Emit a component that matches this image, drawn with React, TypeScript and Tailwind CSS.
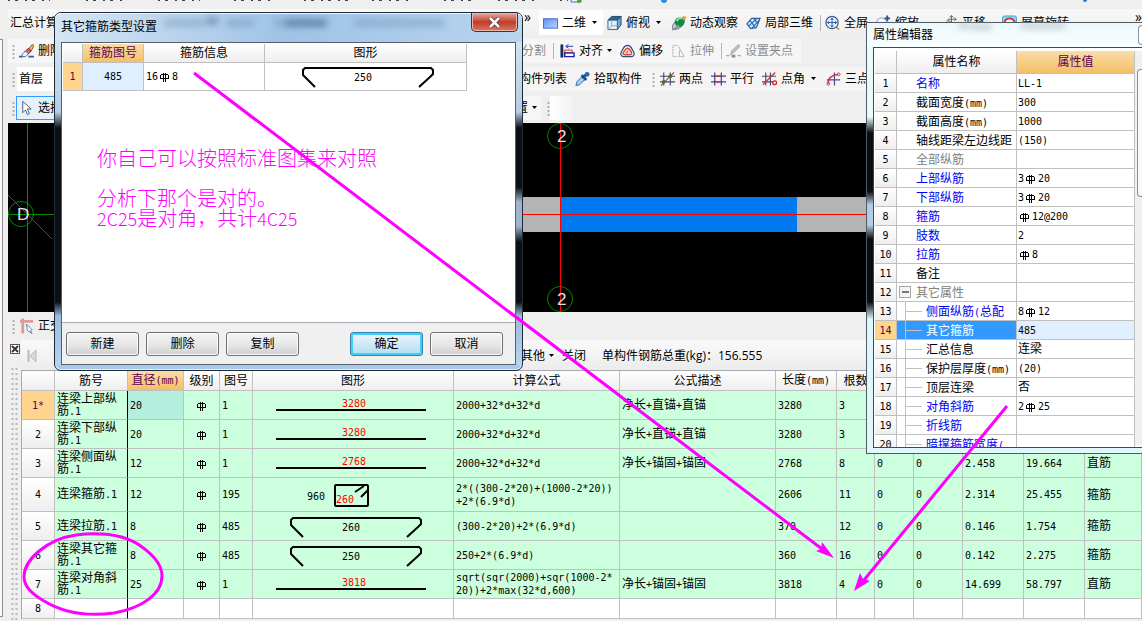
import React, { ReactNode } from "react";

const MONO = "font-['DejaVu_Sans_Mono','Noto_Sans_CJK_SC',monospace]";

interface BarRow {
  no: string;
  name: string;
  diameter: string;
  figure: string;
  shape: ReactNode;
  formula: string;
  note: string;
  length: string;
  count: string;
  unit: string;
  total: string;
  kind: string;
}

interface PropertyRow {
  name: string;
  value?: string;
  tone?: "blue" | "gray";
  level?: number;
  selected?: boolean;
}

// hot rolled bar grade mark
const Grade = () => (
  <svg width="14" height="12" viewBox="0 0 14 12" className="inline-block align-[-3px]" fill="none" stroke="#000" shapeRendering="crispEdges">
    <path d="M3 3.500h7M2.500 4v4M10.500 4v4M5.500 2v9M7.500 2v9M2 7.500h9" />
  </svg>
);

// half-width characters take six pixels beside twelve pixel hanzi
const Txt = ({ children }: { children: string }) => (
  <>
    {children.split(/([\x21-\x7e]+|Φ)/).map((part, index) => {
      if (part === "Φ") return <Grade key={index} />;
      if (/^[\x21-\x7e]/.test(part))
        return (
          <span key={index} className={`${MONO} text-[10px]`}>
            {part}
          </span>
        );
      return part;
    })}
  </>
);

const Straight = ({ label }: { label: string }) => (
  <svg width="200" height="28" className="block">
    <text x="101" y="16" textAnchor="middle" fill="#f00" className={`${MONO} text-[10px]`}>
      {label}
    </text>
    <path d="M23 19h150" stroke="#000" strokeWidth="2" />
  </svg>
);

const Hooked = ({ label }: { label: string }) => (
  <svg width="200" height="27" className="block">
    <text x="98" y="18" textAnchor="middle" className={`${MONO} text-[10px]`}>
      {label}
    </text>
    <path d="M50 24L38 12V7l2-2h126l2 2v4l-3 3-11 10" fill="none" stroke="#000" strokeWidth="2" />
  </svg>
);

const Stirrup = () => (
  <svg width="200" height="33" className="block">
    <text x="54" y="22" className={`${MONO} text-[10px]`}>
      960
    </text>
    <rect x="82" y="7" width="33" height="21" rx="1" fill="none" stroke="#000" strokeWidth="2" />
    <text x="83" y="25" fill="#f00" className={`${MONO} text-[10px]`}>
      260
    </text>
    <path d="M102 14l9-6M108 19l7-7" stroke="#000" strokeWidth="2" />
  </svg>
);

const BARS: BarRow[] = [
  { no: "1*", name: "连梁上部纵筋.1", diameter: "20", figure: "1", shape: <Straight label="3280" />, formula: "2000+32*d+32*d", note: "净长+直锚+直锚", length: "3280", count: "3", unit: "8.09", total: "24.27", kind: "直筋" },
  { no: "2", name: "连梁下部纵筋.1", diameter: "20", figure: "1", shape: <Straight label="3280" />, formula: "2000+32*d+32*d", note: "净长+直锚+直锚", length: "3280", count: "3", unit: "8.09", total: "24.27", kind: "直筋" },
  { no: "3", name: "连梁侧面纵筋.1", diameter: "12", figure: "1", shape: <Straight label="2768" />, formula: "2000+32*d+32*d", note: "净长+锚固+锚固", length: "2768", count: "8", unit: "2.458", total: "19.664", kind: "直筋" },
  { no: "4", name: "连梁箍筋.1", diameter: "12", figure: "195", shape: <Stirrup />, formula: "2*((300-2*20)+(1000-2*20))\n+2*(6.9*d)", note: "", length: "2606", count: "11", unit: "2.314", total: "25.455", kind: "箍筋" },
  { no: "5", name: "连梁拉筋.1", diameter: "8", figure: "485", shape: <Hooked label="260" />, formula: "(300-2*20)+2*(6.9*d)", note: "", length: "370", count: "12", unit: "0.146", total: "1.754", kind: "箍筋" },
  { no: "6", name: "连梁其它箍筋.1", diameter: "8", figure: "485", shape: <Hooked label="250" />, formula: "250+2*(6.9*d)", note: "", length: "360", count: "16", unit: "0.142", total: "2.275", kind: "箍筋" },
  { no: "7", name: "连梁对角斜筋.1", diameter: "25", figure: "1", shape: <Straight label="3818" />, formula: "sqrt(sqr(2000)+sqr(1000-2*\n20))+2*max(32*d,600)", note: "净长+锚固+锚固", length: "3818", count: "4", unit: "14.699", total: "58.797", kind: "直筋" },
];

const PROPERTIES: PropertyRow[] = [
  { name: "名称", value: "LL-1", tone: "blue" },
  { name: "截面宽度(mm)", value: "300" },
  { name: "截面高度(mm)", value: "1000" },
  { name: "轴线距梁左边线距", value: "(150)" },
  { name: "全部纵筋", tone: "gray" },
  { name: "上部纵筋", value: "3Φ20", tone: "blue" },
  { name: "下部纵筋", value: "3Φ20", tone: "blue" },
  { name: "箍筋", value: "Φ12@200", tone: "blue" },
  { name: "肢数", value: "2", tone: "blue" },
  { name: "拉筋", value: "Φ8", tone: "blue" },
  { name: "备注" },
  { name: "其它属性", tone: "gray", level: 1 },
  { name: "侧面纵筋(总配", value: "8Φ12", tone: "blue", level: 2 },
  { name: "其它箍筋", value: "485", level: 2, selected: true },
  { name: "汇总信息", value: "连梁", level: 2 },
  { name: "保护层厚度(mm)", value: "(20)", level: 2 },
  { name: "顶层连梁", value: "否", level: 2 },
  { name: "对角斜筋", value: "2Φ25", tone: "blue", level: 2 },
  { name: "折线筋", tone: "blue", level: 2 },
  { name: "暗撑箍筋宽度(", tone: "blue", level: 2 },
];

const COLUMNS = ["筋号", "直径(mm)", "级别", "图号", "图形", "计算公式", "公式描述", "长度(mm)", "根数", "", "", "", "", ""];

const Icon = ({ children }: { children: ReactNode }) => (
  <svg width="15" height="16" viewBox="0 0 16 16" fill="none" className="shrink-0">
    {children}
  </svg>
);

const Caret = ({ tight }: { tight?: boolean }) => (
  <svg width={tight ? 5 : 9} height="4" viewBox="0 0 5 4" className="shrink-0">
    <path d="M0 0h5L2.5 3z" fill="#000" />
  </svg>
);

const Grip = () => (
  <svg width="3" height="15" className="shrink-0">
    <path d="M1.500 1v14" stroke="#b0b0b0" strokeWidth="2" strokeDasharray="2 2" />
  </svg>
);

const Divider = () => <div className="ml-[3px] h-4 w-px shrink-0 bg-[#b4b4b4]" />;

interface ToolProps {
  label: string;
  icon?: ReactNode;
  caret?: "wide" | "tight";
  disabled?: boolean;
  className?: string;
}

const Tool = ({ label, icon, caret, disabled, className = "" }: ToolProps) => (
  <button
    type="button"
    disabled={disabled}
    className={`flex h-6 shrink-0 items-center gap-1 px-1 whitespace-nowrap disabled:text-[#8c8c8c] ${className}`}
  >
    {icon && <Icon>{icon}</Icon>}
    {label}
    {caret && <Caret tight={caret === "tight"} />}
  </button>
);

const rectIcon = (
  <>
    <defs>
      <linearGradient id="blueRect" x1="0" y1="0" x2="1" y2="1">
        <stop stopColor="#5d92f7" />
        <stop offset="1" stopColor="#bcd3ff" />
      </linearGradient>
    </defs>
    <rect x="0.500" y="3.500" width="15" height="10" fill="url(#blueRect)" stroke="#4466c0" />
  </>
);
const cubeIcon = (
  <>
    <path d="M1 5l4-4h10l-4 4z" fill="#2a6595" stroke="#1f4668" />
    <path d="M11 5l4-4v9l-4 5z" fill="#72a5d3" stroke="#1f4668" />
    <path d="M1 5h10v10H1z" fill="#e6f1fa" stroke="#2e628e" />
    <path d="M5 5v6h6M5 11l-4 4" stroke="#7ea8cc" />
  </>
);
const orbitIcon = (
  <>
    <ellipse cx="8" cy="9" rx="8" ry="4" transform="rotate(-40 8 9)" fill="#c4ced6" stroke="#6a7a88" />
    <circle cx="9" cy="7" r="5" fill="#0c8f3c" />
    <path d="M6 6q2-4 6-3" stroke="#8cebaa" strokeWidth="2" />
    <path d="M1 15q5-1 7-5" stroke="#8a94a0" strokeWidth="2" />
    <circle cx="14" cy="2.500" r="2" fill="#e8a818" />
  </>
);
const meshIcon = (
  <>
    <path d="M1 9l5-6 9 0-4 10-6 1z" fill="#cfe5f7" stroke="#265f9c" strokeWidth="1.200" />
    <path d="M4 5l6 8M8 3l5 6M3 11l8-7M6 14l8-9" stroke="#2d6fb2" strokeWidth="1.200" />
  </>
);
const fullIcon = (
  <>
    <path d="M12 12l3 3" stroke="#d39b45" strokeWidth="2" />
    <circle cx="7.500" cy="7.500" r="6.500" fill="#edf4fd" stroke="#3e5f96" strokeWidth="1.400" />
    <path d="M7.500 3v9M3 7.500h9M6 4.500l1.500-2 1.500 2M6 10.500l1.500 2 1.500-2M4.500 6l-2 1.500 2 1.500M10.500 6l2 1.500-2 1.500" stroke="#2d5596" />
  </>
);
const zoomIcon = (
  <>
    <circle cx="6" cy="8" r="5.500" fill="#f3f8fc" stroke="#8899aa" />
    <path d="M9 3h6M12 0v6" stroke="#31527c" strokeWidth="2" />
  </>
);
const panIcon = (
  <>
    <path d="M9 0v8M5 4h9M7 2l2-2 2 2M12 2l2 2-2 2" stroke="#53626e" />
    <path d="M2 9l3-4 6 3v6H4z" fill="#ead58f" stroke="#927c38" />
  </>
);
const spinIcon = (
  <>
    <rect x="0.500" y="0.500" width="15" height="15" rx="2" fill="#8bd4f1" stroke="#3ba4cc" />
    <path d="M2 10a6 7 0 0 1 12 0" fill="#fff" stroke="#cd3236" strokeWidth="2" />
  </>
);
const alignIcon = (
  <>
    <path d="M2 1v14" stroke="#182e54" strokeWidth="3" />
    <path d="M14 3H7M9 1L6 3l3 2" stroke="#2a2ab4" />
    <path d="M5 7h8v3H5z" stroke="#d22" />
    <path d="M5 10h10v4H5z" stroke="#22229e" strokeWidth="1.500" />
  </>
);
const offsetIcon = (
  <>
    <path d="M8 2c4 0 4 3 6 6s1 6-2 6H4c-3 0-4-3-2-6s2-6 6-6z" stroke="#314c78" strokeWidth="1.300" />
    <path d="M8 5c2 0 3 2 4 4s0 3-1 3H5c-2 0-2-2-1-3s2-4 4-4z" fill="#fbd7d0" stroke="#d54a40" strokeWidth="1.500" />
    <path d="M8 8v2H6" stroke="#d54a40" />
  </>
);
const stretchIcon = (
  <>
    <path d="M7 2H2v12h5" stroke="#a8a8a8" strokeDasharray="2 1" />
    <path d="M8 3l6 11H8M9 7v7" stroke="#b4b4b4" />
  </>
);
const clampIcon = (
  <>
    <path d="M5 12l1-4 7-7 2 2-7 7z" fill="#c0c0c0" stroke="#aaa" />
    <path d="M0 13h4M12 13h4" stroke="#999" />
    <path d="M6 12h4v3H6z" fill="#909090" />
  </>
);
const pickIcon = (
  <>
    <path d="M1 15l1-4 6-6 3 3-6 6z" fill="#a8d0f4" stroke="#2a6ab0" />
    <path d="M7 4l5 5M9 6l4-4" stroke="#174d8e" strokeWidth="3" />
    <circle cx="13" cy="3" r="2.500" fill="#2a64ab" />
  </>
);
const twoPointIcon = (
  <>
    <path d="M4 1v14M11 1v14M0 5h16M0 11h16" stroke="#46466e" strokeWidth="1.200" />
    <path d="M1 15L15 1" stroke="#d43030" strokeWidth="1.200" />
    <circle cx="4" cy="11" r="2" fill="#357a28" />
    <circle cx="11" cy="5" r="2" fill="#357a28" />
  </>
);
const parallelIcon = (
  <>
    <path d="M4 1v14M11 1v14" stroke="#46466e" strokeWidth="1.300" />
    <path d="M0 5h16M0 11h16" stroke="#3b3bb0" strokeWidth="1.300" />
    <path d="M5 5h6M5 11h6" stroke="#d43030" strokeWidth="1.300" />
  </>
);
const angleIcon = (
  <>
    <path d="M4 1v14M9 1v14M0 5h15M0 11h12" stroke="#46466e" strokeWidth="1.200" />
    <path d="M1 14L14 1" stroke="#d43030" strokeWidth="1.400" />
    <circle cx="13.500" cy="12" r="2" stroke="#d22" strokeWidth="1.500" />
  </>
);
const arcIcon = (
  <>
    <path d="M9 1v14M1 9h14" stroke="#4a4a92" strokeWidth="1.300" />
    <path d="M2 13c0-6 4-9 11-10" stroke="#d43030" strokeWidth="1.500" />
    <circle cx="2.500" cy="13" r="1.500" stroke="#d43030" />
    <circle cx="13.500" cy="3" r="1.500" stroke="#d43030" />
  </>
);
const eraserIcon = (
  <>
    <path d="M0 14h4M10 14h6" stroke="#33629c" strokeWidth="2" />
    <path d="M10 6l4-5 2 1-3 6z" fill="#f0bd35" stroke="#8a6416" />
    <path d="M6 9l4-4 3 3-4 4z" fill="#d95d79" stroke="#6a2f3a" />
    <path d="M3 12l4-4 3 3-3 3H4z" fill="#f5f5ff" stroke="#50608e" />
  </>
);
const cursorPath = "M4 1v12l3-3 2 5 2-1-2-5h4z";

const Toolbars = () => (
  <div className="flex flex-col bg-[#efefef]">
    <svg width="100%" height="9" className="block" aria-hidden="true">
      <path d="M0 0.500h42M78 0.500h40M150 0.500h42M226 0.500h36M296 0.500h44M364 0.500h40M436 0.500h34M490 0.500h36M552 0.500h8" stroke="#3f3f48" strokeDasharray="2 5 3 7" />
      <path d="M563 0v2h10v-2" stroke="#3a78b8" fill="none" />
      <circle cx="571" cy="1" r="2" fill="#4ba91f" />
      <circle cx="656" cy="0" r="3" fill="#2d8be0" />
      <circle cx="1077" cy="0" r="2" fill="#2d6be0" />
    </svg>
    <div className="flex h-7 items-center bg-linear-to-b from-[#f8f8f8] to-[#eeeeee]">
      <div className="w-[514px] shrink-0">
        <button type="button" className="px-0.5">汇总计算</button>
      </div>
      <span className="w-[17px] shrink-0 self-start pl-0.5 text-sm leading-4">»</span>
      <Tool label="二维" icon={rectIcon} caret="wide" className="bg-white" />
      <Tool label="俯视" icon={cubeIcon} caret="wide" />
      <Tool label="动态观察" icon={orbitIcon} />
      <Tool label="局部三维" icon={meshIcon} />
      <Divider />
      <Tool label="全屏" icon={fullIcon} />
      <Tool label="缩放" icon={zoomIcon} />
      <Tool label="平移" icon={panIcon} className="ml-4" />
      <Tool label="屏幕旋转" icon={spinIcon} className="ml-2" />
      <span className="ml-auto self-start text-sm leading-4">»</span>
    </div>
    <div className="flex h-7 items-center">
      <div className="flex h-6 w-[510px] shrink-0 items-center bg-[#f6f6f6] pl-1">
        <Grip />
        <Tool label="删除" icon={eraserIcon} />
      </div>
      <div className="flex h-6 items-center bg-[#f6f6f6] pr-1">
        <Tool label="分割" disabled />
        <Divider />
        <Tool label="对齐" icon={alignIcon} caret="tight" className="ml-0.5" />
        <Tool label="偏移" icon={offsetIcon} />
        <Tool label="拉伸" icon={stretchIcon} disabled />
        <Divider />
        <Tool label="设置夹点" icon={clampIcon} disabled />
      </div>
    </div>
    <div className="flex h-7 items-center">
      <div className="flex w-[507px] shrink-0 items-center pl-1">
        <Grip />
        <select aria-label="楼层" className="ml-0.5 h-6 w-20 appearance-none bg-white px-0.5">
          <option>首层</option>
        </select>
      </div>
      <div className="flex h-6 grow items-center bg-[#f4f4f4]">
        <Tool label="构件列表" />
        <Tool label="拾取构件" icon={pickIcon} className="mr-1.5" />
        <Grip />
        <Tool label="两点" icon={twoPointIcon} className="ml-px" />
        <Tool label="平行" icon={parallelIcon} />
        <Tool label="点角" icon={angleIcon} caret="wide" />
        <Tool label="三点" icon={arcIcon} />
      </div>
    </div>
    <div className="flex h-[30px] items-center">
      <div className="flex w-[504px] shrink-0 items-center pl-1">
        <Grip />
        <Tool
          label="选择"
          icon={<path d={cursorPath} fill="#fff" stroke="#4a5a70" />}
          className="ml-px border border-[#3399ff] bg-[#e4f0fb] pl-0.5"
        />
      </div>
      <Tool label="置" caret="tight" className="mr-1.5 bg-[#f6f6f6]" />
      <Grip />
      <div className="h-6 w-6 bg-linear-to-r from-white to-[#f2f2f2]" />
    </div>
  </div>
);

const Canvas = () => (
  <svg width="100%" height="189" className="block shrink-0 bg-black font-['Liberation_Sans',sans-serif] text-[17px]">
    <g stroke="#008a00" fill="none">
      <path d="M19.500 0v189M0 91.500h60M0 72l44 44" />
      <circle cx="13" cy="91" r="12.500" />
      <circle cx="552" cy="13" r="12.500" />
      <circle cx="552" cy="176" r="12.500" />
    </g>
    <rect x="500" y="74" width="100%" height="35" fill="#b4b4b4" />
    <rect x="553" y="74" width="236" height="35" fill="#0078f0" />
    <path d="M500 91.500h900M552.500 0v189" stroke="#f00" />
    <g fill="#e0e0e0">
      <text x="9" y="97">D</text>
      <text x="549" y="19">2</text>
      <text x="549" y="182">2</text>
    </g>
  </svg>
);

const headCell = "border-r border-b border-[#c0c0c0] bg-linear-to-b from-white to-[#eeeeee] p-0 text-center font-normal whitespace-nowrap overflow-hidden";
const hotHead = "border-r border-b border-[#c0c0c0] bg-linear-to-b from-[#fbdcaa] to-[#f3bf63] p-0 text-center font-normal whitespace-nowrap text-[#5c0050]";
const hotRow = "border-r border-b border-[#c0c0c0] bg-[#ffd48c] p-0 text-center font-normal text-[#5c0050]";

const BarTable = () => (
  <table className="w-full table-fixed border-separate border-spacing-0 border-t border-l border-[#a8a8b0] leading-3">
    <colgroup>
      <col className="w-[33px]" />
      <col className="w-[73px]" />
      <col className="w-[56px]" />
      <col className="w-[36px]" />
      <col className="w-[33px]" />
      <col className="w-[201px]" />
      <col className="w-[166px]" />
      <col className="w-[156px]" />
      <col className="w-[61px]" />
      <col className="w-[38px]" />
      <col className="w-[39px]" />
      <col className="w-[49px]" />
      <col className="w-[61px]" />
      <col className="w-[61px]" />
      <col />
    </colgroup>
    <thead>
      <tr className="h-5">
        <th className={headCell} />
        {COLUMNS.map((title, index) => (
          <th key={index} className={index === 1 ? hotHead : headCell}>
            <Txt>{title}</Txt>
          </th>
        ))}
      </tr>
    </thead>
    <tbody>
      {BARS.map((bar, index) => {
        const cell = "border-r border-b border-[#c0c0c0] bg-[#ccffdd] py-0 pr-0 pl-0.5";
        const bareCell = "border-r border-b border-[#c0c0c0] bg-[#ccffdd] p-0";
        return (
          <tr key={bar.no} className={bar.no === "4" ? "h-[34px]" : "h-[29px]"}>
            <th className={index === 0 ? `${hotRow} font-bold` : headCell}>
              <Txt>{bar.no}</Txt>
            </th>
            <td className="border-r border-b border-r-black border-b-[#c0c0c0] bg-[#ccffdd] py-0 pr-0 pl-0.5">
              <Txt>{bar.name}</Txt>
            </td>
            <td className={index === 0 ? "border-r border-b border-[#c0c0c0] bg-[#b4eedd] py-0 pr-0 pl-0.5" : cell}>
              <Txt>{bar.diameter}</Txt>
            </td>
            <td className={`${bareCell} text-center`}>
              <Grade />
            </td>
            <td className={cell}>
              <Txt>{bar.figure}</Txt>
            </td>
            <td className={bareCell}>{bar.shape}</td>
            <td className={`${cell} whitespace-pre`}>
              <Txt>{bar.formula}</Txt>
            </td>
            <td className={cell}>
              <Txt>{bar.note}</Txt>
            </td>
            <td className={cell}>
              <Txt>{bar.length}</Txt>
            </td>
            <td className={cell}>
              <Txt>{bar.count}</Txt>
            </td>
            <td className={cell}>
              <Txt>0</Txt>
            </td>
            <td className={cell}>
              <Txt>0</Txt>
            </td>
            <td className={cell}>
              <Txt>{bar.unit}</Txt>
            </td>
            <td className={cell}>
              <Txt>{bar.total}</Txt>
            </td>
            <td className={cell}>{bar.kind}</td>
          </tr>
        );
      })}
      <tr className="h-5">
        <th className={headCell}>
          <Txt>8</Txt>
        </th>
        {COLUMNS.map((_, index) => (
          <td
            key={index}
            className={
              index === 0
                ? "border-r border-b border-r-black border-b-[#c0c0c0] bg-white"
                : "border-r border-b border-[#c0c0c0] bg-white"
            }
          />
        ))}
      </tr>
    </tbody>
  </table>
);

const dialogButton = "h-6 w-[73px] rounded-[3px] border border-[#707070] bg-linear-to-b from-[#f3f3f3] via-[#e8e8e8] to-[#d0d0d0] shadow-[inset_0_0_0_1px_#fafafa]";

const StirrupDialog = () => (
  <section
    aria-label="其它箍筋类型设置"
    className="absolute top-3 left-[54px] flex w-[469px] flex-col rounded-[7px] border border-[#1e2a38] bg-[#a9c9ea] shadow-[inset_0_0_0_1px_#e3f1fc]"
  >
    <header className="flex h-[29px] items-start justify-between rounded-t-md bg-linear-to-r from-[#d5e5f3] via-[#9fc3e6] to-[#b9d5ef] pl-1.5 shadow-[inset_0_1px_0_#eef7ff]">
      <h2 className="pt-1.5 leading-4">其它箍筋类型设置</h2>
      <svg width="300" height="24" aria-hidden="true" className="min-w-0 shrink blur-[3px]">
        <path d="M0 10h40M62 10h28M110 10h54M190 10h90" stroke="#6d8dae" strokeWidth="8" opacity="0.4" />
        <path d="M42 8h12M122 10h40" stroke="#34517c" strokeWidth="8" opacity="0.4" />
      </svg>
      <button
        type="button"
        aria-label="关闭"
        className="mr-1 flex h-[19px] w-[47px] items-center justify-center rounded-b-[5px] border border-t-0 border-[#562a2c] bg-linear-to-b from-[#e4a99c] via-[#c03c28] to-[#d9765f] shadow-[inset_0_0_0_1px_#edb8ac]"
      >
        <svg width="13" height="11" viewBox="0 0 13 11">
          <path d="M2 1l9 9M11 1l-9 9" stroke="#4a3040" strokeWidth="4" />
          <path d="M2 1l9 9M11 1l-9 9" stroke="#fff" strokeWidth="2.500" />
        </svg>
      </button>
    </header>
    <div className="flex">
      <div className="w-1.5 bg-[linear-gradient(#cfe2f3_0px,#b5cde4_70px,#0c1016_86px,#0c1016_260px,#9bbcdc_274px,#b4d3f0_322px)]" />
      <div className="grow border border-[#55606c] bg-[#f0f0f0]">
        <div className="h-[280px] border-b border-[#a8a8b0] bg-white px-px pt-px">
          <table className="table-fixed border-separate border-spacing-0 leading-3">
            <colgroup>
              <col className="w-5" />
              <col className="w-[61px]" />
              <col className="w-[121px]" />
              <col className="w-[202px]" />
            </colgroup>
            <thead>
              <tr className="h-[19px]">
                <th className={headCell} />
                <th className={hotHead}>箍筋图号</th>
                <th className={headCell}>箍筋信息</th>
                <th className={headCell}>图形</th>
              </tr>
            </thead>
            <tbody>
              <tr className="h-7">
                <th className={hotRow}>
                  <Txt>1</Txt>
                </th>
                <td className="border-r border-b border-[#c0c0c0] bg-[#e0efff] p-0 text-center">
                  <Txt>485</Txt>
                </td>
                <td className="border-r border-b border-[#c0c0c0] py-0 pr-0 pl-0.5">
                  <Txt>16Φ8</Txt>
                </td>
                <td className="border-r border-b border-[#c0c0c0] p-0">
                  <Hooked label="250" />
                </td>
              </tr>
            </tbody>
          </table>
          <div className="pt-[57px] pl-[34px] font-['Noto_Sans_CJK_SC',sans-serif] text-[20px] leading-5 font-light text-[#ff00ff]">
            <p>你自己可以按照标准图集来对照</p>
            <p className="pt-5">分析下那个是对的。</p>
            <p>
              <span className="text-[18px]">2C25</span>是对角，共计
              <span className="text-[18px]">4C25</span>
            </p>
          </div>
        </div>
        <footer className="flex items-center gap-[7px] pt-[9px] pr-3 pb-2 pl-1">
          <button type="button" className={dialogButton}>新建</button>
          <button type="button" className={dialogButton}>删除</button>
          <button type="button" className={dialogButton}>复制</button>
          <button
            type="button"
            className="ml-auto h-6 w-[73px] rounded-[3px] border border-[#3c7fb1] bg-linear-to-b from-[#ecf6fc] to-[#b4dcf2] shadow-[inset_0_0_0_2px_#3fd0fa]"
          >
            确定
          </button>
          <button type="button" className={dialogButton}>取消</button>
        </footer>
      </div>
      <div className="w-1.5 bg-[linear-gradient(#cfe2f3_0px,#b5cde4_70px,#0c1016_86px,#0c1016_145px,#9fb4cc_160px,#9fb4cc_184px,#0c1016_200px,#0c1016_260px,#9bbcdc_274px,#b4d3f0_322px)]" />
    </div>
    <div className="h-[5px]" />
  </section>
);

const nameTone = (row: PropertyRow) => {
  if (row.selected) return "text-white";
  if (row.tone === "blue") return "text-[#0000f0]";
  if (row.tone === "gray") return "text-[#808080]";
  return "text-black";
};

const TreeMark = ({ level }: { level?: number }) => {
  if (level === 1)
    return (
      <svg width="19" height="18" className="shrink-0">
        <rect x="2.500" y="3.500" width="11" height="11" fill="#f4f4f4" stroke="#a8a8a8" />
        <path d="M5 9h7" stroke="#000" />
      </svg>
    );
  if (level === 2)
    return (
      <svg width="29" height="19" className="shrink-0">
        <path d="M8.500 0v19M9 9.500h16" stroke="#c0c0c0" />
      </svg>
    );
  return <span className="w-[19px] shrink-0" />;
};

const PropertyEditor = () => (
  <section
    aria-label="属性编辑器"
    className="absolute top-[22px] right-0 flex w-[276px] flex-col border border-r-0 border-[#4e5a64] bg-[#dff6fb]"
  >
    <header className="flex h-6 items-center justify-between bg-linear-to-b from-[#eef8fb] to-[#f7ffff] pl-1.5">
      <h2 className="leading-4">属性编辑器</h2>
      <svg width="170" height="14" aria-hidden="true" className="self-start blur-[3px]">
        <path d="M8 3h10M70 3h44M20 4h20" stroke="#8f9ca8" strokeWidth="5" opacity="0.5" />
      </svg>
      <button type="button" aria-label="关闭" className="h-5 w-1 rounded-l border border-r-0 border-[#8a949c] bg-white" />
    </header>
    <div className="flex">
      <div className="w-1.5 bg-[linear-gradient(#e8f8fb_0px,#e8f8fb_70px,#0a0c10_86px,#0a0c10_144px,#b4cce4_158px,#b4cce4_178px,#0a0c10_192px,#0a0c10_255px,#dff6fb_272px)]" />
      <div className="flex h-[401px] grow overflow-hidden border border-r-0 border-[#404850] bg-white pt-[3px] pb-0.5 pl-px">
        <table className="h-fit table-fixed border-separate border-spacing-0 leading-3">
          <colgroup>
            <col className="w-[22px]" />
            <col className="w-[120px]" />
            <col className="w-[118px]" />
          </colgroup>
          <thead>
            <tr className="h-[23px]">
              <th className={headCell} />
              <th className={headCell}>属性名称</th>
              <th className={hotHead}>属性值</th>
            </tr>
          </thead>
          <tbody>
            {PROPERTIES.map((row, index) => (
              <tr key={row.name} className="h-[19px]">
                <th className={row.selected ? hotRow : headCell}>
                  <Txt>{String(index + 1)}</Txt>
                </th>
                <td className={`border-r border-b border-[#c0c0c0] p-0 ${row.selected ? "bg-[#3399ff]" : ""}`}>
                  <div className={`flex h-[18px] items-center overflow-hidden whitespace-nowrap ${nameTone(row)}`}>
                    <TreeMark level={row.level} />
                    <span className="pt-0.5">
                      <Txt>{row.name}</Txt>
                    </span>
                  </div>
                </td>
                <td className={`border-r border-b border-[#c0c0c0] py-0 pr-0 pl-px ${row.selected ? "bg-[#e0efff]" : ""}`}>
                  <Txt>{row.value ?? ""}</Txt>
                </td>
              </tr>
            ))}
          </tbody>
        </table>
        <div className="grow bg-[#f0f0f0] pt-[18px] pl-0.5">
          <div className="h-32 rounded-l-sm border border-r-0 border-[#909090] bg-[#f8f8f8]" />
        </div>
      </div>
    </div>
    <div className="h-[5px]" />
  </section>
);

const Annotations = () => (
  <svg className="pointer-events-none absolute inset-0 h-full w-full" aria-hidden="true">
    <g stroke="#ff00ff" strokeWidth="3" fill="none">
      <path d="M194 73L822 549M1007 406L864 580" />
      <path d="M24 577c0-18 24-38 52-42 26-3 50 0 66 12 14 10 20 20 20 29 0 18-20 32-48 37-30 4-52-1-70-12-14-8-20-16-20-24z" />
    </g>
    <path d="M834 558l-12-16-1 7-5 2zM854 591l6-18 3 6 7 2z" fill="#ff00ff" />
  </svg>
);

const App = () => {
  return (
    <div className="relative flex h-screen overflow-hidden bg-[#efefef] font-['Open_Sans','Noto_Sans_CJK_SC',sans-serif] text-[12px] leading-4 text-black">
      <div className="flex w-2 shrink-0 flex-col pt-[39px]">
        <div className="mb-1 w-[3px] grow border border-l-0 border-[#8c8c90] bg-[#f8f8f8]" />
      </div>
      <main className="flex min-w-0 grow flex-col">
        <Toolbars />
        <Canvas />
        <div className="flex h-7 shrink-0 items-center pl-1">
          <Grip />
          <Tool
            label="正交"
            icon={
              <>
                <path d="M1 3h14M4 0v16" stroke="#dc9c9c" strokeWidth="3" />
                <path d="M8 6l6 6-2 1 2 3-5-3z" fill="#fff" stroke="#6080a0" />
              </>
            }
          />
        </div>
        <div className="flex grow">
          <div className="flex w-[13px] shrink-0 flex-col items-center pt-1">
            <button type="button" aria-label="关闭面板">
              <svg width="10" height="10" viewBox="0 0 10 10" className="block">
                <rect x="0.500" y="0.500" width="9" height="9" fill="#fff" stroke="#6b4a4c" />
                <path d="M2 2l6 6M8 2L2 8" stroke="#2d3550" strokeWidth="2" />
              </svg>
            </button>
            <svg width="7" className="grow">
              <path d="M1.500 14v300M5.500 14v300" stroke="#b8b8b8" strokeWidth="2" strokeDasharray="2 3" />
            </svg>
          </div>
          <div className="flex min-w-0 grow flex-col">
            <div className="flex h-[30px] shrink-0 items-center bg-linear-to-b from-[#fafafa] to-[#ececec] pt-0.5">
              <div className="w-[496px] shrink-0 pl-1.5">
                <button type="button" aria-label="第一条" className="block">
                  <svg width="10" height="12" viewBox="0 0 10 12" className="block">
                    <path d="M1.500 0v12" stroke="#b8b8b8" strokeWidth="2" />
                    <path d="M9 0v12L3 6z" fill="#d8d8d8" stroke="#b8b8b8" />
                  </svg>
                </button>
              </div>
              <Tool label="其他" caret="tight" />
              <Tool label="关闭" />
              <p className="pl-3 whitespace-nowrap">单构件钢筋总重(kg)：156.555</p>
            </div>
            <BarTable />
          </div>
        </div>
      </main>
      <StirrupDialog />
      <PropertyEditor />
      <Annotations />
    </div>
  );
};

export default App;
